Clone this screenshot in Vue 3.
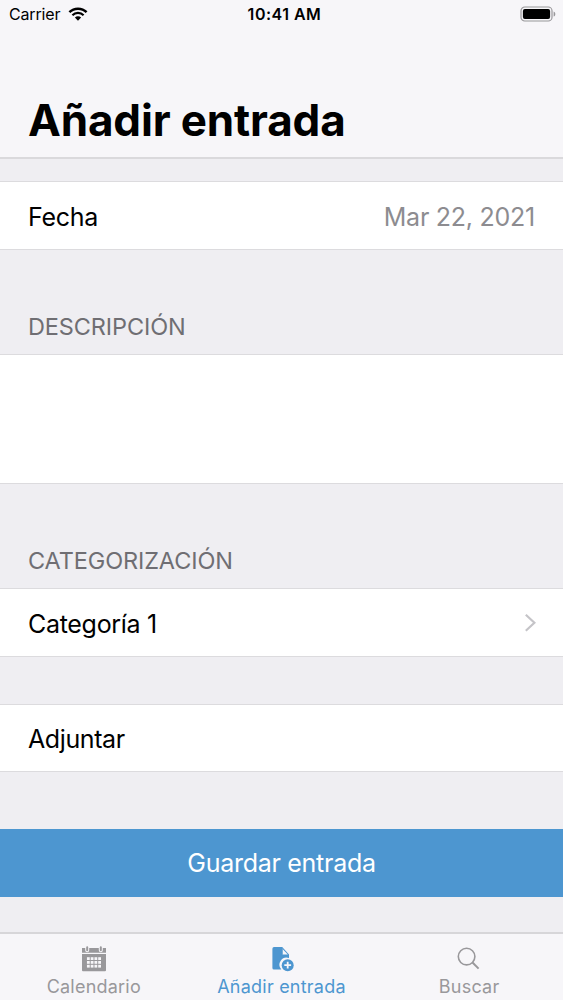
<template>
  <div class="screen">
    <header class="header">
      <div class="status-bar">
        <div class="carrier">
          <span class="carrier-name">Carrier</span>
          <svg class="wifi" width="20" height="14" viewBox="0 0 20 14">
            <path d="M1.4 5.1 A12.4 12.4 0 0 1 18.6 5.1" fill="none" stroke="#000" stroke-width="2.5" />
            <path d="M4.4 8.2 A8.1 8.1 0 0 1 15.6 8.2" fill="none" stroke="#000" stroke-width="2.2" />
            <path d="M6.9 10.6 A4.4 4.4 0 0 1 13.1 10.6 L10 13.7 Z" fill="#000" />
          </svg>
        </div>
        <span class="time">10:41 AM</span>
        <svg class="battery" width="36" height="16" viewBox="0 0 36 16">
          <rect x="1" y="1" width="31" height="14" rx="3.8" fill="none" stroke="#98979a" stroke-width="1.2" />
          <rect x="2.9" y="2.9" width="27.2" height="10.2" rx="2" fill="#000" />
          <path d="M33.6 5.4 C35.9 6.2 35.9 9.8 33.6 10.6 Z" fill="#98979a" />
        </svg>
      </div>
      <h1 class="title">Añadir entrada</h1>
    </header>

    <main class="form">
      <div class="row row-date">
        <span class="label">Fecha</span>
        <span class="value">{{ date }}</span>
      </div>

      <h2 class="section-title">DESCRIPCIÓN</h2>
      <div class="row row-text"></div>

      <h2 class="section-title">CATEGORIZACIÓN</h2>
      <div class="row">
        <span class="label">Categoría 1</span>
        <svg class="chevron" width="12" height="18" viewBox="0 0 12 18">
          <path d="M1.8 0.8 L10.4 8.8 L1.8 16.8" fill="none" stroke="#c5c4c8" stroke-width="2.2" />
        </svg>
      </div>

      <div class="row row-attach">
        <span class="label">Adjuntar</span>
      </div>

      <button class="save" type="button">Guardar entrada</button>
    </main>

    <nav class="tabs">
      <a
        v-for="tab in tabs"
        :key="tab.id"
        class="tab"
        :class="{ active: tab.id === activeTab }"
        @click="activeTab = tab.id"
      >
        <svg v-if="tab.id === 'calendar'" class="icon" width="26" height="26" viewBox="0 0 26 26">
          <path fill="currentColor" d="M1 2H25V6.8H1Z M1 8H25V24.3Q25 25.3 24 25.3H2Q1 25.3 1 24.3Z" />
          <path d="M6.2 1V4.2M19.8 1V4.2" fill="none" stroke="#f7f6f9" stroke-width="4" stroke-linecap="round" />
          <path d="M6.2 1.2V4.2M19.8 1.2V4.2" fill="none" stroke="currentColor" stroke-width="2" stroke-linecap="round" />
          <g fill="#f7f6f9">
            <template v-for="y in 3" :key="y">
              <rect v-for="x in 4" :key="x" :x="2.2 + x * 3.75" :y="7.4 + y * 3.8" width="2.8" height="2.8" />
            </template>
          </g>
        </svg>
        <svg v-else-if="tab.id === 'add'" class="icon" width="26" height="26" viewBox="0 0 26 26">
          <path fill="currentColor" d="M6 1.1H14.4V9H21V12A7.2 7.2 0 0 0 13.3 23.6H6Q4.4 23.6 4.4 22V2.7Q4.4 1.1 6 1.1Z" />
          <path fill="currentColor" d="M14.2 1.1L21 8.4V9.2H14.2Z" />
          <path fill="#f7f6f9" d="M14.8 3.2L19.8 8.6H14.8Z" />
          <circle cx="19.7" cy="19.2" r="6" fill="currentColor" />
          <path d="M19.7 15.8V22.6M16.3 19.2H23.1" stroke="#f7f6f9" stroke-width="1.8" />
        </svg>
        <svg v-else class="icon" width="26" height="26" viewBox="0 0 26 26">
          <circle cx="10.6" cy="10.6" r="8.3" fill="none" stroke="currentColor" stroke-width="1.6" />
          <path d="M16.5 16.5L22.6 22.6" stroke="currentColor" stroke-width="2" />
        </svg>
        <span class="tab-label">{{ tab.label }}</span>
      </a>
    </nav>
  </div>
</template>

<script setup>
import { ref } from 'vue';

const date = ref('Mar 22, 2021');
const activeTab = ref('add');

const tabs = [
  { id: 'calendar', label: 'Calendario' },
  { id: 'add', label: 'Añadir entrada' },
  { id: 'search', label: 'Buscar' }
];
</script>

<style>
body {
  margin: 0;
}
</style>

<style scoped>
.screen {
  display: flex;
  flex-direction: column;
  width: 563px;
  height: 1000px;
  overflow: hidden;
  background: #efeef2;
  color: #000;
  font-family: Inter, 'Liberation Sans', sans-serif;
}

.header {
  box-sizing: border-box;
  height: 159px;
  background: #f7f6f9;
  border-bottom: 2px solid #dad9dc;
}

.status-bar {
  display: grid;
  grid-template-columns: 1fr auto 1fr;
  align-items: center;
  height: 28px;
  padding: 0 7px 0 9px;
  font-size: 16px;
  line-height: 28px;
}

.carrier {
  display: flex;
  align-items: center;
  gap: 8px;
}

.carrier-name {
  letter-spacing: -0.15px;
}

.time {
  padding-left: 4px;
  font-weight: 600;
  letter-spacing: 0.5px;
}

.battery {
  justify-self: end;
}

.title {
  margin: 64px 0 0 28px;
  font-size: 44px;
  font-weight: 700;
  letter-spacing: -0.15px;
  line-height: 56px;
  white-space: nowrap;
}

.form {
  display: flex;
  flex-direction: column;
  height: 773px;
}

.row {
  display: flex;
  box-sizing: border-box;
  flex-shrink: 0;
  align-items: center;
  justify-content: space-between;
  height: 69px;
  padding: 0 27px 0 28px;
  border-top: 1px solid #dcdbde;
  border-bottom: 1px solid #dcdbde;
  background: #fff;
  font-size: 25px;
  letter-spacing: -0.3px;
}

.label,
.value {
  padding-top: 2px;
}

.row-date {
  margin-top: 22px;
}

.value {
  padding-right: 1px;
  color: #8d8c90;
  letter-spacing: -0.25px;
}

.section-title {
  height: 56px;
  margin: 48px 0 0 28px;
  color: #6f6e73;
  font-size: 23.5px;
  font-weight: 400;
  letter-spacing: -0.12px;
  line-height: 58px;
}

.row-text {
  height: 130px;
}

.row-attach {
  height: 68px;
  margin-top: 47px;
}

.row-attach .label {
  padding-top: 1px;
  letter-spacing: -0.4px;
}

.save {
  height: 68px;
  margin: 57px 0 0;
  padding: 0;
  border: 0;
  background: #4d96d0;
  color: #fff;
  font-family: inherit;
  font-size: 25px;
  letter-spacing: -0.28px;
}

.tabs {
  display: grid;
  box-sizing: border-box;
  grid-template-columns: 1fr 1fr 1fr;
  height: 68px;
  border-top: 2px solid #d7d6d9;
  background: #f7f6f9;
}

.tab {
  display: flex;
  flex-direction: column;
  align-items: center;
  padding-top: 12px;
  color: #99989b;
}

.tab.active {
  color: #4d96d0;
}

.tab-label {
  margin-top: 3px;
  font-size: 18px;
  letter-spacing: 0.22px;
  line-height: 24px;
  white-space: nowrap;
}
</style>
